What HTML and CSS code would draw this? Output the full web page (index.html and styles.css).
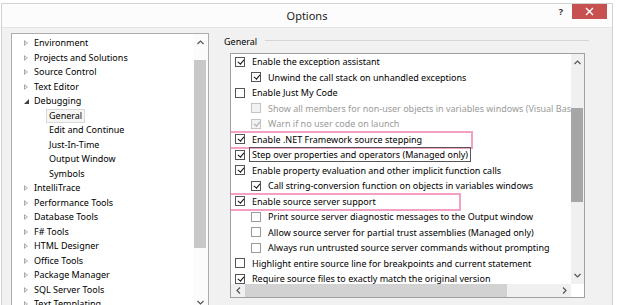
FILE: index.html
```html
<!DOCTYPE html>
<html lang="en">
<head>
    <meta charset="UTF-8">
    <title>Options</title>
    <link rel="stylesheet" href="styles.css">
</head>
<body>
    <div class="window">
        <div class="titlebar">
            <span></span>
            <span class="title">Options</span>
            <div class="caption-buttons">
                <span class="help">?</span>
                <span class="close">
                    <svg width="9" height="9" viewBox="0 0 9 9"><path d="M1 1 L8 8 M8 1 L1 8" stroke="#fff" stroke-width="1.4" fill="none"/></svg>
                </span>
            </div>
        </div>
        <div class="body">
            <div class="tree">
                <ul class="tree-list">
                    <li class="node"><span class="arrow"></span>Environment</li>
                    <li class="node"><span class="arrow"></span>Projects and Solutions</li>
                    <li class="node"><span class="arrow"></span>Source Control</li>
                    <li class="node"><span class="arrow"></span>Text Editor</li>
                    <li class="node"><span class="arrow open"></span>Debugging</li>
                    <li class="child"><span class="selected">General</span></li>
                    <li class="child">Edit and Continue</li>
                    <li class="child">Just-In-Time</li>
                    <li class="child">Output Window</li>
                    <li class="child">Symbols</li>
                    <li class="node"><span class="arrow"></span>IntelliTrace</li>
                    <li class="node"><span class="arrow"></span>Performance Tools</li>
                    <li class="node"><span class="arrow"></span>Database Tools</li>
                    <li class="node"><span class="arrow"></span>F# Tools</li>
                    <li class="node"><span class="arrow"></span>HTML Designer</li>
                    <li class="node"><span class="arrow"></span>Office Tools</li>
                    <li class="node"><span class="arrow"></span>Package Manager</li>
                    <li class="node"><span class="arrow"></span>SQL Server Tools</li>
                    <li class="node"><span class="arrow"></span>Text Templating</li>
                </ul>
                <div class="vscroll tree-scroll">
                    <div class="sb-btn"><svg width="7" height="5" viewBox="0 0 7 5"><path d="M0.5 4 L3.5 1 L6.5 4" stroke="#555" stroke-width="1.2" fill="none"/></svg></div>
                    <div class="track"><div class="thumb"></div></div>
                    <div class="sb-btn"><svg width="7" height="5" viewBox="0 0 7 5"><path d="M0.5 1 L3.5 4 L6.5 1" stroke="#555" stroke-width="1.2" fill="none"/></svg></div>
                </div>
            </div>
            <div class="page">
                <div class="group-head">
                    <span>General</span>
                    <div class="rule"></div>
                </div>
                <div class="listbox">
                    <div class="list-main">
                        <div class="items">
                            <div class="item"><span class="cb on"></span>Enable the exception assistant</div>
                            <div class="item sub"><span class="cb on"></span>Unwind the call stack on unhandled exceptions</div>
                            <div class="item"><span class="cb"></span>Enable Just My Code</div>
                            <div class="item sub off"><span class="cb"></span>Show all members for non-user objects in variables windows (Visual Basic only)</div>
                            <div class="item sub off"><span class="cb on"></span>Warn if no user code on launch</div>
                            <div class="item"><span class="cb on"></span>Enable .NET Framework source stepping<span class="mark mark-net"></span></div>
                            <div class="item"><span class="cb on"></span><span class="focus">Step over properties and operators (Managed only)</span></div>
                            <div class="item"><span class="cb on"></span>Enable property evaluation and other implicit function calls</div>
                            <div class="item sub"><span class="cb on"></span>Call string-conversion function on objects in variables windows</div>
                            <div class="item"><span class="cb on"></span>Enable source server support<span class="mark mark-server"></span></div>
                            <div class="item sub"><span class="cb light"></span>Print source server diagnostic messages to the Output window</div>
                            <div class="item sub"><span class="cb light"></span>Allow source server for partial trust assemblies (Managed only)</div>
                            <div class="item sub"><span class="cb light"></span>Always run untrusted source server commands without prompting</div>
                            <div class="item"><span class="cb"></span>Highlight entire source line for breakpoints and current statement</div>
                            <div class="item"><span class="cb on"></span>Require source files to exactly match the original version</div>
                        </div>
                        <div class="hscroll">
                            <div class="sb-btn"><svg width="5" height="7" viewBox="0 0 5 7"><path d="M4 0.5 L1 3.5 L4 6.5" stroke="#555" stroke-width="1.2" fill="none"/></svg></div>
                            <div class="htrack"><div class="hthumb"></div></div>
                            <div class="sb-btn"><svg width="5" height="7" viewBox="0 0 5 7"><path d="M1 0.5 L4 3.5 L1 6.5" stroke="#555" stroke-width="1.2" fill="none"/></svg></div>
                        </div>
                    </div>
                    <div class="vscroll list-scroll">
                        <div class="sb-btn"><svg width="7" height="5" viewBox="0 0 7 5"><path d="M0.5 4 L3.5 1 L6.5 4" stroke="#555" stroke-width="1.2" fill="none"/></svg></div>
                        <div class="track"><div class="thumb"></div></div>
                        <div class="sb-btn"><svg width="7" height="5" viewBox="0 0 7 5"><path d="M0.5 1 L3.5 4 L6.5 1" stroke="#555" stroke-width="1.2" fill="none"/></svg></div>
                        <div class="corner"></div>
                    </div>
                </div>
            </div>
        </div>
    </div>
</body>
</html>
```

FILE: styles.css
```css
html, body {
    margin: 0;
    padding: 0;
    height: 305px;
    overflow: hidden;
    background-color: #fff;
    font-family: "Noto Sans", "Open Sans", sans-serif;
    color: #000;
}

.window {
    margin: 3px 0 0 1px;
    width: 612px;
    height: 320px;
    box-sizing: border-box;
    border: 1px solid #d2d2d2;
    border-bottom: none;
    background-color: #f1f1f1;
}

.titlebar {
    height: 23px;
    display: grid;
    grid-template-columns: 1fr auto 1fr;
    background-color: #fcfcfc;
    border-bottom: 1px solid #e4e4e4;
}

.title {
    font-size: 11px;
    line-height: 23px;
    color: #222;
}

.caption-buttons {
    display: flex;
    justify-content: flex-end;
    align-items: flex-start;
    padding-right: 5px;
}

.help {
    font-size: 9px;
    font-weight: bold;
    line-height: 15px;
    margin-right: 9px;
    color: #333;
}

.close {
    width: 35px;
    height: 15px;
    background-color: #c75050;
    display: flex;
    align-items: center;
    justify-content: center;
}

.body {
    display: flex;
    padding: 5px 0 0 9px;
}

/* left tree */
.tree {
    width: 198px;
    height: 279px;
    box-sizing: border-box;
    border: 1px solid #abadb3;
    background-color: #fff;
    display: flex;
}

.tree-list {
    list-style: none;
    margin: 0;
    padding: 2px 0 0 0;
    flex: 1;
    overflow: hidden;
    font-size: 9px;
}

.tree-list li {
    height: 14.5px;
    line-height: 14.5px;
    white-space: nowrap;
    display: flex;
    align-items: center;
}

.node {
    padding-left: 12px;
}

.child {
    padding-left: 37px;
}

.arrow {
    width: 4px;
    height: 6px;
    margin-right: 6px;
    box-sizing: border-box;
    border-left: 4px solid #a8a8a8;
    border-top: 3px solid transparent;
    border-bottom: 3px solid transparent;
    position: relative;
}

.arrow::after {
    content: "";
    position: absolute;
    left: -3px;
    top: -1px;
    border-left: 2px solid #fff;
    border-top: 1px solid transparent;
    border-bottom: 1px solid transparent;
}

.arrow.open {
    width: 5px;
    height: 5px;
    border: none;
    border-right: 5px solid #404040;
    border-top: 5px solid transparent;
    margin-right: 5px;
}

.arrow.open::after {
    display: none;
}

.selected {
    margin-left: -3px;
    padding: 0 2px;
    border: 1px solid #d9d9d9;
    background-color: #f6f6f6;
    line-height: 12px;
}

/* scrollbars */
.vscroll {
    display: flex;
    flex-direction: column;
    background-color: #f0f0f0;
}

.tree-scroll {
    width: 15px;
    background-color: #fbfbfb;
}

.sb-btn {
    height: 17px;
    display: flex;
    align-items: center;
    justify-content: center;
    flex: none;
}

.track {
    flex: 1;
}

.tree-scroll .thumb {
    margin: 9px 2px 0 1px;
    height: 188px;
    background-color: #c8c8c8;
}

/* right page */
.page {
    margin-left: 15px;
    width: 365px;
}

.group-head {
    display: flex;
    align-items: center;
    height: 16px;
    font-size: 9px;
    margin-bottom: 4px;
}

.rule {
    flex: 1;
    height: 1px;
    margin-left: 8px;
    margin-top: -1px;
    background-color: #d5d5d5;
}

.listbox {
    margin-left: 6px;
    width: 355px;
    height: 245px;
    box-sizing: border-box;
    border: 1px solid #a0a0a0;
    background-color: #fff;
    display: flex;
}

.list-main {
    flex: 1;
    min-width: 0;
    display: flex;
    flex-direction: column;
}

.items {
    flex: 1;
    overflow: hidden;
    font-size: 9px;
}

.item {
    height: 15.5px;
    display: flex;
    align-items: center;
    padding-left: 4px;
    white-space: nowrap;
    position: relative;
}

.item.sub {
    padding-left: 20px;
}

.item.off {
    color: #9a9a9a;
}

.cb {
    flex: none;
    width: 10px;
    height: 10px;
    margin-right: 7px;
    box-sizing: border-box;
    border: 1px solid #555;
    background-color: #fff;
    position: relative;
}

.cb.light {
    border-color: #9a9a9a;
}

.cb.on::after {
    content: "";
    position: absolute;
    left: 2.5px;
    top: 0;
    width: 2.5px;
    height: 5px;
    border: solid #111;
    border-width: 0 1.6px 1.6px 0;
    transform: rotate(40deg);
}

.off .cb {
    border-color: #c4c4c4;
    background-color: #f2f2f2;
}

.off .cb.on::after {
    border-color: #a8a8a8;
}

.focus {
    margin-left: -3px;
    padding: 0 2px;
    border: 1px solid #555;
    line-height: 13px;
}

.mark {
    position: absolute;
    left: -2px;
    top: -1px;
    height: 18px;
    box-sizing: border-box;
    border: 2px solid #f3a0c4;
}

.mark-net {
    width: 244px;
}

.mark-server {
    width: 232px;
}

.hscroll {
    height: 13px;
    display: flex;
    background-color: #f0f0f0;
}

.hscroll .sb-btn {
    width: 14px;
    height: 13px;
}

.htrack {
    flex: 1;
}

.hthumb {
    width: 262px;
    height: 100%;
    background-color: #d2d2d2;
}

.list-scroll {
    width: 13px;
}

.list-scroll .thumb {
    margin: 37px 1px 0 0;
    height: 94px;
    background-color: #a6a6a6;
}

.corner {
    height: 13px;
    background-color: #fff;
}
```
